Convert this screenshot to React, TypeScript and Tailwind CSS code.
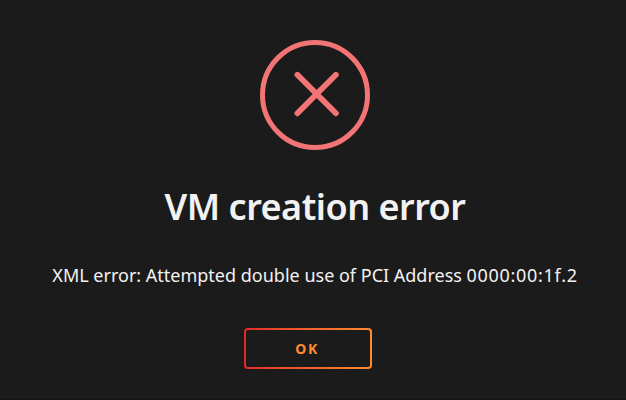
function ErrorIcon() {
  return (
    <svg width="110" height="110" viewBox="0 0 110 110" fill="none" stroke="#f27474" strokeWidth="5">
      <circle cx="55" cy="55" r="52.5" />
      <path d="M37.4 34.8 75.9 73.3M75.9 34.8 37.4 73.3" strokeWidth="5.8" strokeLinecap="round" />
    </svg>
  );
}

export default function App() {
  return (
    <div className="flex h-[400px] w-[626px] flex-col items-center border-b border-[#191218] bg-[#1c1b1b] pt-10 pl-1 font-['Noto_Sans',sans-serif] text-[#f2f2f2]">
      <ErrorIcon />
      <h2 className="mt-8 text-4xl leading-[50px] font-[650] tracking-[-0.5px] whitespace-nowrap">
        VM creation error
      </h2>
      <p className="mt-[30px] text-lg leading-[26px] whitespace-nowrap">
        XML error: Attempted double use of PCI Address <span className="tracking-[0.7px]">0000:00:1f.2</span>
      </p>
      <button
        type="button"
        className="mt-10 mr-3.5 h-[41px] w-32 rounded bg-linear-to-r from-[#e22828] to-[#ff8c2f] p-0.5"
      >
        <span className="flex h-full w-full items-center justify-center rounded-[2px] bg-[#1c1b1b] pr-0.5 text-sm font-bold tracking-[1.6px] text-[#ff8c2f]">
          OK
        </span>
      </button>
    </div>
  );
}
